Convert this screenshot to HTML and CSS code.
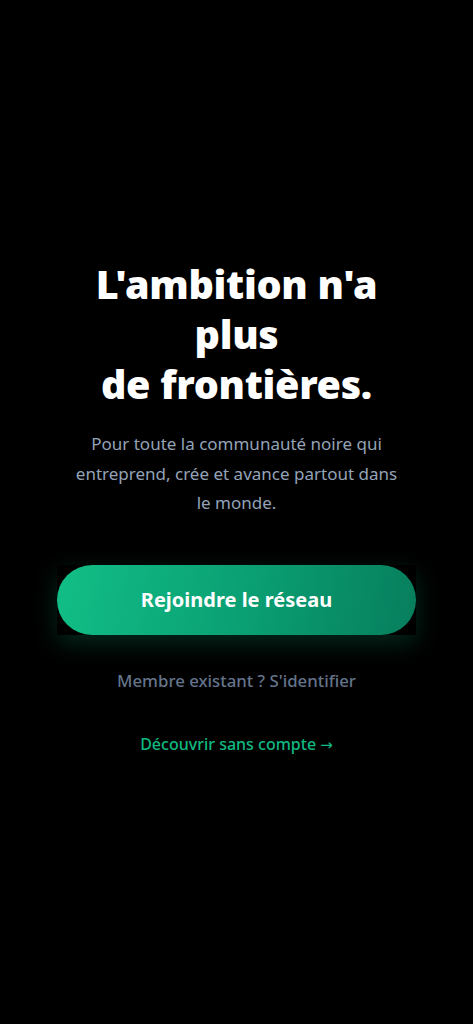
FILE: index.html
```html
<!DOCTYPE html>
<html lang="fr">
<head>
    <meta charset="UTF-8">
    <title>L'ambition n'a plus de frontières</title>
    <link rel="stylesheet" href="styles.css">
</head>
<body>
<div class="welcome">
    <div class="hero">
        <h1 class="title">L'ambition n'a plus<br>de frontières.</h1>
        <p class="lead">Pour toute la communauté noire qui entreprend, crée et avance partout dans le monde.</p>
    </div>
    <div class="actions">
        <div class="ctaWrap">
            <a class="cta" href="#">Rejoindre le réseau</a>
        </div>
        <a class="login" href="#">Membre existant ? S'identifier</a>
        <a class="guest" href="#">Découvrir sans compte <span class="arrow">→</span></a>
    </div>
</div>
</body>
</html>
```

FILE: styles.css
```css
* {
    margin: 0;
    padding: 0;
    box-sizing: border-box;
}
html, body {
    height: 100%;
}
body {
    background: #000;
    font-family: "Noto Sans", "Open Sans", sans-serif;
    -webkit-font-smoothing: antialiased;
}
a {
    text-decoration: none;
}
.welcome {
    min-height: 100%;
    display: flex;
    flex-direction: column;
    justify-content: center;
    align-items: center;
    padding: 0 57px 10px;
}
.hero {
    display: flex;
    flex-direction: column;
    align-items: center;
    text-align: center;
}
.title {
    max-width: 320px;
    color: #fff;
    font-size: 39.5px;
    font-weight: 900;
    line-height: 50px;
    letter-spacing: -0.3px;
}
.lead {
    margin-top: 20px;
    max-width: 328px;
    color: #94a3b8;
    font-size: 17px;
    line-height: 29.5px;
}
.actions {
    width: 100%;
    margin-top: 47px;
    display: flex;
    flex-direction: column;
    align-items: center;
}
/*外层方块带绿色光晕*/
.ctaWrap {
    width: 100%;
    background: #000;
    box-shadow: 0 8px 24px rgba(16, 185, 129, 0.22);
}
.cta {
    display: flex;
    justify-content: center;
    align-items: center;
    height: 70px;
    border-radius: 35px;
    background: linear-gradient(100deg, #12be86, #0a9e72 55%, #077e5d);
    color: #fff;
    font-size: 20px;
    font-weight: 700;
}
.login {
    margin-top: 34px;
    color: #64748b;
    font-size: 16.8px;
    font-weight: 500;
}
.guest {
    margin-top: 41px;
    color: #10b981;
    font-size: 16px;
    font-weight: 500;
}
.arrow {
    font-family: "DejaVu Sans", sans-serif;
    font-size: 15px;
}
```
